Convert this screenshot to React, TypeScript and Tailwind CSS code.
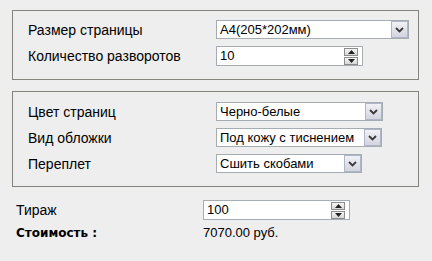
import type { ReactNode } from "react";

function ArrowButton() {
  return (
    <span className="flex h-full w-[17px] shrink-0 items-center justify-center border border-[#b0b6c8] bg-gradient-to-b from-[#f1f1f6] to-[#d3d4df]">
      <svg width="9" height="6" viewBox="0 0 9 6">
        <path d="M1 1 L4.5 4.5 L8 1" fill="none" stroke="#3a3a3a" strokeWidth="1.8" />
      </svg>
    </span>
  );
}

function Spinner() {
  return (
    <span className="flex w-[14px] shrink-0 flex-col gap-px">
      <span className="flex h-[8px] items-center justify-center border border-[#8c8c8c] bg-gradient-to-b from-[#f6f6f6] to-[#d6d6d6]">
        <svg width="7" height="4" viewBox="0 0 7 4">
          <path d="M0 4 L3.5 0 L7 4 Z" fill="#222" />
        </svg>
      </span>
      <span className="flex h-[8px] items-center justify-center border border-[#8c8c8c] bg-gradient-to-b from-[#f6f6f6] to-[#d6d6d6]">
        <svg width="7" height="4" viewBox="0 0 7 4">
          <path d="M0 0 L3.5 4 L7 0 Z" fill="#222" />
        </svg>
      </span>
    </span>
  );
}

function Select({ value, width }: { value: string; width: string }) {
  return (
    <div className={`flex h-[19px] items-stretch border border-[#a5acb2] bg-white text-[13px] ${width}`}>
      <span className="flex-1 truncate pl-[3px] leading-[17px]">{value}</span>
      <ArrowButton />
    </div>
  );
}

function NumberInput({ value, width }: { value: string; width: string }) {
  return (
    <div className={`flex h-[20px] items-center border border-[#a5acb2] bg-white pr-[4px] text-[13px] ${width}`}>
      <span className="flex-1 pl-[3px] leading-[18px]">{value}</span>
      <Spinner />
    </div>
  );
}

function Row({ label, children }: { label: string; children: ReactNode }) {
  return (
    <div className="flex items-center">
      <span className="w-[188px] shrink-0">{label}</span>
      {children}
    </div>
  );
}

export default function App() {
  return (
    <div className="h-[261px] w-[432px] bg-[#eeeeee] pl-[12px] pt-[10px] text-[14px] leading-[16px] text-black [font-family:'Liberation_Sans',Arial,sans-serif]">
      <div className="flex w-[407px] flex-col gap-[7px] border border-[#84847c] pb-[13px] pl-[15px] pt-[9px]">
        <Row label="Размер страницы">
          <Select value="A4(205*202мм)" width="w-[193px]" />
        </Row>
        <Row label="Количество разворотов">
          <NumberInput value="10" width="w-[147px]" />
        </Row>
      </div>

      <div className="mt-[11px] flex w-[407px] flex-col gap-[7px] border border-[#84847c] pb-[13px] pl-[15px] pt-[10px]">
        <Row label="Цвет страниц">
          <Select value="Черно-белые" width="w-[167px]" />
        </Row>
        <Row label="Вид обложки">
          <Select value="Под кожу с тиснением" width="w-[166px]" />
        </Row>
        <Row label="Переплет">
          <Select value="Сшить скобами" width="w-[146px]" />
        </Row>
      </div>

      <div className="mt-[13px] flex flex-col gap-[5px] pl-[4px]">
        <div className="flex items-center">
          <span className="w-[187px] shrink-0">Тираж</span>
          <NumberInput value="100" width="w-[147px]" />
        </div>
        <div className="flex items-center">
          <span className="w-[187px] shrink-0 text-[12px] font-bold [font-family:'DejaVu_Sans',Verdana,sans-serif]">
            Стоимость :
          </span>
          <span className="text-[13px]">7070.00 руб.</span>
        </div>
      </div>
    </div>
  );
}
